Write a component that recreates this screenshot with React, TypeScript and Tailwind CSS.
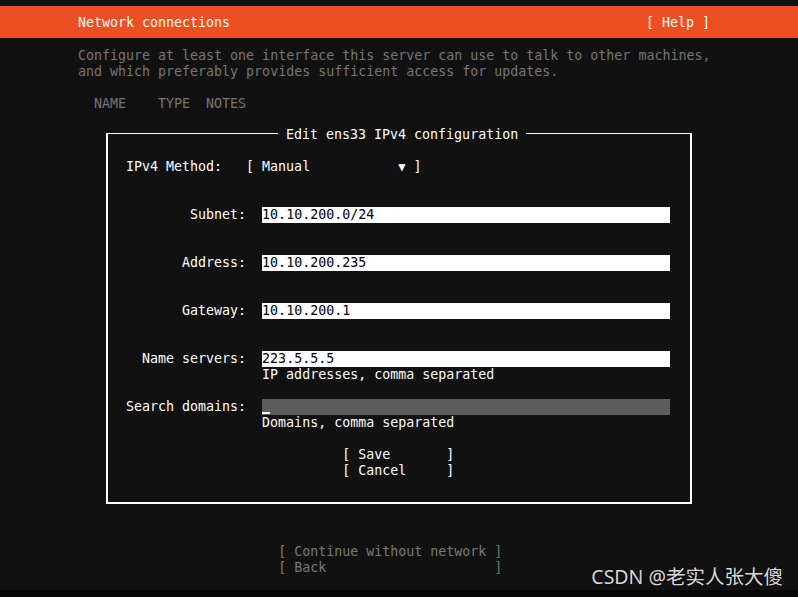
import React from "react";

const mono = { fontFamily: '"DejaVu Sans Mono", "Liberation Mono", monospace' };

function Row({ children, className = "" }: { children?: React.ReactNode; className?: string }) {
  return <div className={"h-4 leading-4 whitespace-pre " + className}>{children ?? " "}</div>;
}

function Field({ label, value }: { label: string; value: string }) {
  return (
    <Row>
      {label.padStart(17, " ") + "  "}
      <span className="inline-block w-[408px] h-4 align-top bg-white text-black">{value}</span>
    </Row>
  );
}

export default function App() {
  return (
    <div
      className="relative w-[798px] h-[597px] bg-[#111111] flex flex-col text-[13.3px] text-white overflow-hidden"
      style={mono}
    >
      <div className="h-[6px] shrink-0" />
      <div className="h-8 shrink-0 bg-[#ec5022] flex items-center justify-between pl-[78px] pr-[88px] pt-[2px] whitespace-pre">
        <span>Network connections</span>
        <span>[ Help ]</span>
      </div>
      <div className="flex-1 flex flex-col pl-[78px] pt-[10px]">
        <Row className="text-[#777777]">Configure at least one interface this server can use to talk to other machines,</Row>
        <Row className="text-[#777777]">and which preferably provides sufficient access for updates.</Row>
        <Row />
        <Row className="text-[#777777]">{"  NAME    TYPE  NOTES"}</Row>
        <Row />
        {/* dialog */}
        <div className="ml-[28px] w-[586px] flex flex-col mt-[-2px]">
          <div className="h-4 flex">
            <div className="w-[172px] h-[9px] self-end border-l-2 border-t border-white" />
            <div className="w-[248px] h-4 leading-4 whitespace-pre pt-[1px]">{" Edit ens33 IPv4 configuration "}</div>
            <div className="flex-1 h-[9px] self-end border-r-2 border-t border-white" />
          </div>
          <div className="border-x-2 border-b-2 border-white pl-[2px] pt-[1px] pb-[7px] flex flex-col">
            <Row />
            <Row>{"  IPv4 Method:   [ Manual           "}<span className="text-[12px]">▼</span>{" ]"}</Row>
            <Row />
            <Row />
            <Field label="Subnet:" value="10.10.200.0/24" />
            <Row />
            <Row />
            <Field label="Address:" value="10.10.200.235" />
            <Row />
            <Row />
            <Field label="Gateway:" value="10.10.200.1" />
            <Row />
            <Row />
            <Field label="Name servers:" value="223.5.5.5" />
            <Row>{" ".repeat(19) + "IP addresses, comma separated"}</Row>
            <Row />
            <Row>
              {"Search domains:".padStart(17, " ") + "  "}
              <span className="inline-flex w-[408px] h-4 align-top bg-[#5b5d5a] items-end">
                <span className="w-[8px] h-[2px] bg-white mb-[1px]" />
              </span>
            </Row>
            <Row>{" ".repeat(19) + "Domains, comma separated"}</Row>
            <Row />
            <Row>{" ".repeat(29) + "[ Save       ]"}</Row>
            <Row>{" ".repeat(29) + "[ Cancel     ]"}</Row>
            <Row />
          </div>
        </div>
        <div className="h-[40px]" />
        <Row className="text-[#7a7a7a]">{" ".repeat(25) + "[ Continue without network ]"}</Row>
        <Row className="text-[#7a7a7a]">{" ".repeat(25) + "[ Back                     ]"}</Row>
      </div>
      <div className="h-[7px] shrink-0 bg-[#050505]" />
      <div
        className="absolute right-[15px] bottom-[9px] text-[19.5px] leading-[22px] text-[#d8d8d8] whitespace-pre"
        style={{ fontFamily: '"Noto Sans", "Noto Sans CJK SC", sans-serif', textShadow: "0 0 2px #000" }}
      >
        CSDN @老实人张大傻
      </div>
    </div>
  );
}
